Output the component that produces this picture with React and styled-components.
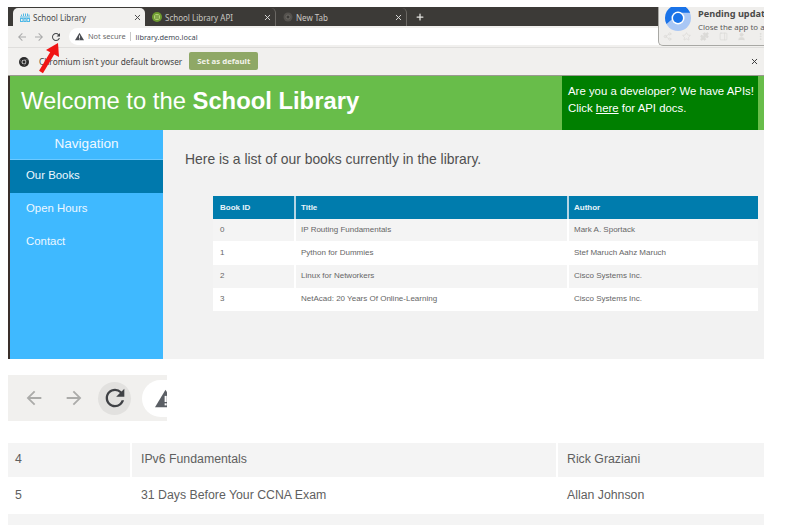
import React from 'react'
import styled, { createGlobalStyle } from 'styled-components'
import { X, Plus, Share2, Star, Puzzle, PanelRight, User, MoreVertical } from 'lucide-react'

const GlobalStyle = createGlobalStyle`
  html, body {
    margin: 0;
    padding: 0;
    height: 525px;
    overflow: hidden;
    background: #fff;
  }
  body {
    font-family: "Liberation Sans", Arial, sans-serif;
  }
`

const Page = styled.div`
  position: relative;
  width: 756px;
  height: 525px;
  margin-left: 8px;
  padding-top: 7px;
  box-sizing: border-box;
`

const BrowserShot = styled.div`
  display: flex;
  flex-direction: column;
  height: 352px;
`

const TabStrip = styled.div`
  display: flex;
  align-items: flex-end;
  height: 19px;
  padding-left: 5px;
  background: #3c3a37;
  font-family: "Noto Sans", sans-serif;
  font-size: 8px;
`

const Tab = styled.div`
  display: flex;
  align-items: center;
  width: ${(p) => p.$width}px;
  height: 18px;
  box-sizing: border-box;
  padding: 0 3px 0 7px;
  gap: 3px;
  color: ${(p) => (p.$active ? '#4a4a4a' : '#c9c7c3')};
  background: ${(p) => (p.$active ? '#f1f0ee' : 'transparent')};
  border-radius: 5px 5px 0 0;
  border-right: ${(p) => (p.$divider ? '1px solid #6b6864' : 'none')};
`

const TabTitle = styled.span`
  flex: 1;
  white-space: nowrap;
`

const TabAdd = styled.div`
  display: flex;
  align-items: center;
  height: 18px;
  margin-left: 8px;
  color: #e6e5e2;
`

const Toolbar = styled.div`
  display: flex;
  align-items: center;
  height: 21px;
  padding-left: 8px;
  background: #f1f0ee;
`

const NavIcons = styled.div`
  display: flex;
  align-items: center;
  gap: 5px;
  width: 53px;
  flex-shrink: 0;
`

const Omnibox = styled.div`
  display: flex;
  align-items: center;
  flex: 1;
  height: 17px;
  padding-left: 6px;
  background: #fff;
  border-radius: 9px 0 0 9px;
  font-family: "Noto Sans", sans-serif;
  font-size: 7.4px;
`

const SecurityLabel = styled.span`
  margin-left: 4px;
  padding-right: 4px;
  color: #6a6a6a;
  border-right: 1px solid #c8c8c8;
  line-height: 9px;
`

const UrlText = styled.span`
  margin-left: 5px;
  color: #3f4a55;
`

const InfoBar = styled.div`
  display: flex;
  align-items: center;
  height: 29px;
  box-sizing: border-box;
  padding: 0 5px 0 11px;
  background: #f1f0ee;
  border-top: 1px solid #dfdedc;
  border-bottom: 1px solid #9a9a90;
  font-family: "Noto Sans", sans-serif;
  font-size: 8.3px;
  color: #454545;
`

const InfoText = styled.span`
  margin-left: 10px;
  white-space: nowrap;
`

const DefaultButton = styled.div`
  display: flex;
  align-items: center;
  justify-content: center;
  width: 69px;
  height: 18px;
  margin: 0 0 1px 7px;
  background: #8fa866;
  border-radius: 2px;
  color: #f4f4ec;
  font-size: 7.8px;
  font-weight: 700;
`

const InfoClose = styled.div`
  display: flex;
  margin-left: auto;
  color: #333;
`

const Site = styled.div`
  display: flex;
  flex-direction: column;
  flex: 1;
  min-height: 0;
  border-left: 2px solid #3a2f2a;
`

const Header = styled.header`
  display: flex;
  justify-content: space-between;
  height: 54px;
  padding-right: 6px;
  background: #68bd4a;
  color: #fff;
`

const Title = styled.h1`
  margin: 0;
  padding-left: 11px;
  font-size: 23.8px;
  font-weight: 400;
  line-height: 50px;
  white-space: nowrap;
`

const ApiNotice = styled.div`
  width: 196px;
  box-sizing: border-box;
  padding: 7px 0 0 6px;
  background: #007f00;
  font-size: 11.4px;
  line-height: 16.5px;
  white-space: nowrap;

  a {
    color: #fff;
    text-decoration: underline;
  }
`

const Body = styled.div`
  display: flex;
  flex: 1;
  min-height: 0;
`

const Sidebar = styled.nav`
  width: 153px;
  flex-shrink: 0;
  background: #3fb9ff;
  color: #eef8ff;
`

const SidebarTitle = styled.div`
  height: 30px;
  font-size: 13.6px;
  line-height: 28px;
  text-align: center;
  border-bottom: 1px solid #6cc9ff;
  box-sizing: border-box;
`

const NavItem = styled.div`
  height: 33px;
  padding-left: 16px;
  font-size: 11.4px;
  line-height: 31px;
  background: ${(p) => (p.$active ? '#0079ad' : 'transparent')};
`

const Content = styled.main`
  flex: 1;
  padding: 21px 6px 0 22px;
  background: #f2f2f2;
`

const Lead = styled.p`
  margin: 0 0 29px;
  font-size: 13.9px;
  line-height: 16px;
  color: #505050;
  white-space: nowrap;
`

const BookTable = styled.table`
  width: 545px;
  margin-left: 28px;
  border-collapse: collapse;
  table-layout: fixed;
  font-size: 8px;
  color: #666;
`

const HeadCell = styled.th`
  height: 23px;
  padding: 0 0 0 ${(p) => p.$pad}px;
  background: #007cad;
  color: #e8f4fa;
  font-weight: 700;
  text-align: left;
  border-left: 2px solid #b5d5e4;

  &:first-child {
    border-left: none;
  }
`

const BodyCell = styled.td`
  height: ${(p) => p.$h}px;
  box-sizing: border-box;
  padding: 0 0 2px ${(p) => p.$pad}px;
  background: ${(p) => (p.$odd ? '#fff' : '#f4f4f4')};
  border-left: 2px solid #fff;

  &:first-child {
    border-left: none;
  }
`

const CropShot = styled.div`
  display: flex;
  align-items: center;
  width: 159px;
  height: 46px;
  margin-top: 16px;
  padding-left: 15px;
  box-sizing: border-box;
  background: #f1f0ee;
  overflow: hidden;
`

const BigNav = styled.div`
  display: flex;
  align-items: center;
  flex-shrink: 0;
  gap: 18px;
`

const ReloadCircle = styled.div`
  display: flex;
  align-items: center;
  justify-content: center;
  width: 33px;
  height: 33px;
  margin-left: -5px;
  border-radius: 50%;
  background: #e2e1df;
`

const BigOmnibox = styled.div`
  display: flex;
  align-items: center;
  flex-shrink: 0;
  width: 60px;
  height: 37px;
  margin-left: 11px;
  padding-left: 13px;
  box-sizing: border-box;
  background: #fff;
  border-radius: 19px 0 0 19px;
`

const LowerTable = styled.div`
  margin-top: 22px;
  font-size: 12.3px;
  color: #5f5f5f;
`

const LowerRow = styled.div`
  display: grid;
  grid-template-columns: 124px 426px 1fr;
  align-items: stretch;
  height: ${(p) => p.$h}px;
  background: ${(p) => (p.$odd ? '#fff' : '#f4f4f4')};
`

const LowerCell = styled.div`
  display: flex;
  align-items: center;
  padding: 0 0 2px ${(p) => p.$pad}px;
  border-right: ${(p) => (p.$divider ? '2px solid #fff' : 'none')};
`

const UpdateBubble = styled.div`
  position: absolute;
  top: 7px;
  left: 650px;
  width: 106px;
  height: 39px;
  box-sizing: border-box;
  overflow: hidden;
  background: #efeeec;
  border-left: 1px solid #a8a8a4;
  border-bottom: 1px solid #a8a8a4;
  border-radius: 0 0 0 5px;
  font-family: "Noto Sans", sans-serif;
`

const BubbleLogo = styled.svg`
  position: absolute;
  top: -2px;
  left: 6px;
`

const BubbleTitle = styled.div`
  position: absolute;
  top: 0;
  left: 39px;
  font-size: 9.2px;
  font-weight: 700;
  line-height: 13px;
  color: #4b4b4b;
  white-space: nowrap;
`

const BubbleText = styled.div`
  position: absolute;
  top: 14px;
  left: 39px;
  font-size: 7.9px;
  line-height: 12px;
  color: #5a5a5a;
  white-space: nowrap;
`

const GhostIcons = styled.div`
  position: absolute;
  top: 25px;
  left: 4px;
  display: flex;
  gap: 9.6px;
  color: #dcdbd8;
`

const RedArrow = styled.svg`
  position: absolute;
  top: 40px;
  left: 20px;
`

const BackArrow = ({ size, color }) => (
  <svg width={size} height={size} viewBox="0 0 24 24" fill={color}>
    <path d="M20 11H7.83l5.59-5.59L12 4l-8 8 8 8 1.41-1.41L7.83 13H20v-2z" />
  </svg>
)

const ForwardArrow = ({ size, color }) => (
  <svg width={size} height={size} viewBox="0 0 24 24" fill={color}>
    <path d="M4 11h12.17l-5.59-5.59L12 4l8 8-8 8-1.41-1.41L16.17 13H4v-2z" />
  </svg>
)

const ReloadIcon = ({ size, color }) => (
  <svg width={size} height={size} viewBox="0 0 24 24" fill={color}>
    <path d="M17.65 6.35A7.958 7.958 0 0 0 12 4c-4.42 0-7.99 3.58-7.99 8s3.57 8 7.99 8c3.73 0 6.84-2.55 7.73-6h-2.08A5.99 5.99 0 0 1 12 18c-3.31 0-6-2.69-6-6s2.69-6 6-6c1.66 0 3.14.69 4.22 1.78L13 11h7V4l-2.35 2.35z" />
  </svg>
)

const WarningIcon = ({ size, color }) => (
  <svg width={size} height={size} viewBox="0 0 24 24">
    <path d="M12 2 L24 22 H0 Z" fill={color} />
    <rect x="11" y="9" width="2.4" height="7" fill="#fff" />
    <rect x="11" y="17.5" width="2.4" height="2.4" fill="#fff" />
  </svg>
)

const ChromiumMark = () => (
  <svg width="10" height="10" viewBox="0 0 20 20">
    <circle cx="10" cy="10" r="10" fill="#2b2b2b" />
    <circle cx="10" cy="10" r="4.6" fill="#fff" />
    <circle cx="10" cy="10" r="3.3" fill="#2b2b2b" />
    <path d="M10 5.4 H19 M6 12.4 L2 5 M13.6 12.8 L9 19.5" stroke="#8c8c8c" strokeWidth="1" />
  </svg>
)

const LibraryFavicon = () => (
  <svg width="10" height="9" viewBox="0 0 20 18">
    <path d="M3 3v3M7 1v5M11 1v5M15 1v5M18 3v3" stroke="#4fb8e6" strokeWidth="2" />
    <path d="M0 8h20" stroke="#4fb8e6" strokeWidth="2" />
    <rect x="1" y="11" width="5" height="6" fill="none" stroke="#4fb8e6" strokeWidth="2" />
    <rect x="8" y="11" width="4" height="6" fill="none" stroke="#4fb8e6" strokeWidth="2" />
    <rect x="14" y="11" width="5" height="6" fill="none" stroke="#4fb8e6" strokeWidth="2" />
  </svg>
)

const ApiFavicon = () => (
  <svg width="10" height="10" viewBox="0 0 20 20">
    <circle cx="10" cy="10" r="10" fill="#6d9a2e" />
    <circle cx="10" cy="10" r="6" fill="#b6d77a" />
    <path d="M8 6v8M12 6v8" stroke="#55761f" strokeWidth="2" />
  </svg>
)

const NewTabFavicon = () => (
  <svg width="10" height="10" viewBox="0 0 20 20">
    <circle cx="10" cy="10" r="9" fill="#55524e" />
    <circle cx="10" cy="10" r="4" fill="#3c3a37" stroke="#77746f" strokeWidth="1.5" />
  </svg>
)

const upperBooks = [
  ['0', 'IP Routing Fundamentals', 'Mark A. Sportack', 22],
  ['1', 'Python for Dummies', 'Stef Maruch Aahz Maruch', 24],
  ['2', 'Linux for Networkers', 'Cisco Systems Inc.', 23],
  ['3', 'NetAcad: 20 Years Of Online-Learning', 'Cisco Systems Inc.', 23],
]

const App = () => (
  <Page>
    <GlobalStyle />
    <BrowserShot>
      <TabStrip>
        <Tab $active $width={132}>
          <LibraryFavicon />
          <TabTitle>School Library</TabTitle>
          <X size={9} strokeWidth={2.5} color="#444" />
        </Tab>
        <Tab $width={131} $divider>
          <ApiFavicon />
          <TabTitle>School Library API</TabTitle>
          <X size={9} strokeWidth={2.5} color="#ddd" />
        </Tab>
        <Tab $width={131} $divider>
          <NewTabFavicon />
          <TabTitle>New Tab</TabTitle>
          <X size={9} strokeWidth={2.5} color="#ddd" />
        </Tab>
        <TabAdd>
          <Plus size={10} strokeWidth={3} />
        </TabAdd>
      </TabStrip>

      <Toolbar>
        <NavIcons>
          <BackArrow size={12} color="#aaa" />
          <ForwardArrow size={12} color="#aaa" />
          <ReloadIcon size={12} color="#45474a" />
        </NavIcons>
        <Omnibox>
          <WarningIcon size={9} color="#4a4d52" />
          <SecurityLabel>Not secure</SecurityLabel>
          <UrlText>library.demo.local</UrlText>
        </Omnibox>
      </Toolbar>

      <InfoBar>
        <ChromiumMark />
        <InfoText>Chromium isn't your default browser</InfoText>
        <DefaultButton>Set as default</DefaultButton>
        <InfoClose>
          <X size={9} strokeWidth={2.5} />
        </InfoClose>
      </InfoBar>

      <Site>
        <Header>
          <Title>
            Welcome to the <strong>School Library</strong>
          </Title>
          <ApiNotice>
            Are you a developer? We have APIs!
            <br />
            Click <a href="#docs">here</a> for API docs.
          </ApiNotice>
        </Header>
        <Body>
          <Sidebar>
            <SidebarTitle>Navigation</SidebarTitle>
            <NavItem $active>Our Books</NavItem>
            <NavItem>Open Hours</NavItem>
            <NavItem>Contact</NavItem>
          </Sidebar>
          <Content>
            <Lead>Here is a list of our books currently in the library.</Lead>
            <BookTable>
              <colgroup>
                <col style={{ width: 82 }} />
                <col style={{ width: 273 }} />
                <col />
              </colgroup>
              <thead>
                <tr>
                  <HeadCell $pad={7}>Book ID</HeadCell>
                  <HeadCell $pad={5}>Title</HeadCell>
                  <HeadCell $pad={5}>Author</HeadCell>
                </tr>
              </thead>
              <tbody>
                {upperBooks.map(([id, title, author, h], i) => (
                  <tr key={id}>
                    <BodyCell $h={h} $odd={i % 2 === 1} $pad={7}>{id}</BodyCell>
                    <BodyCell $h={h} $odd={i % 2 === 1} $pad={5}>{title}</BodyCell>
                    <BodyCell $h={h} $odd={i % 2 === 1} $pad={5}>{author}</BodyCell>
                  </tr>
                ))}
              </tbody>
            </BookTable>
          </Content>
        </Body>
      </Site>
    </BrowserShot>

    <CropShot>
      <BigNav>
        <BackArrow size={22} color="#ababa9" />
        <ForwardArrow size={22} color="#ababa9" />
        <ReloadCircle>
          <ReloadIcon size={28} color="#3f4145" />
        </ReloadCircle>
      </BigNav>
      <BigOmnibox>
        <WarningIcon size={21} color="#5a5e64" />
      </BigOmnibox>
    </CropShot>

    <LowerTable>
      <LowerRow $h={34}>
        <LowerCell $pad={7} $divider>4</LowerCell>
        <LowerCell $pad={9} $divider>IPv6 Fundamentals</LowerCell>
        <LowerCell $pad={9}>Rick Graziani</LowerCell>
      </LowerRow>
      <LowerRow $h={37} $odd>
        <LowerCell $pad={7}>5</LowerCell>
        <LowerCell $pad={9}>31 Days Before Your CCNA Exam</LowerCell>
        <LowerCell $pad={9}>Allan Johnson</LowerCell>
      </LowerRow>
      <LowerRow $h={11} />
    </LowerTable>

    <UpdateBubble>
      <BubbleLogo width="26" height="26" viewBox="0 0 34 34">
        <circle cx="17" cy="17" r="17" fill="#a9c7f5" />
        <path d="M17 0 A17 17 0 0 0 2 25 L11 17 Q12 10 17 10 H33 A17 17 0 0 0 17 0 Z" fill="#1a73e8" />
        <circle cx="17" cy="17" r="8.5" fill="#fff" />
        <circle cx="17" cy="17" r="6.5" fill="#1a73e8" />
      </BubbleLogo>
      <BubbleTitle>Pending update</BubbleTitle>
      <BubbleText>Close the app to apply</BubbleText>
      <GhostIcons>
        <Share2 size={9} />
        <Star size={9} />
        <Puzzle size={9} fill="currentColor" />
        <PanelRight size={9} />
        <User size={9} fill="currentColor" />
        <MoreVertical size={9} />
      </GhostIcons>
    </UpdateBubble>

    <RedArrow width="34" height="36" viewBox="0 0 34 36">
      <path d="M13 32 L25 12" stroke="#f01414" strokeWidth="4.5" />
      <path d="M30 3 L18 10 L31 17 Z" fill="#f01414" />
    </RedArrow>
  </Page>
)

export default App
